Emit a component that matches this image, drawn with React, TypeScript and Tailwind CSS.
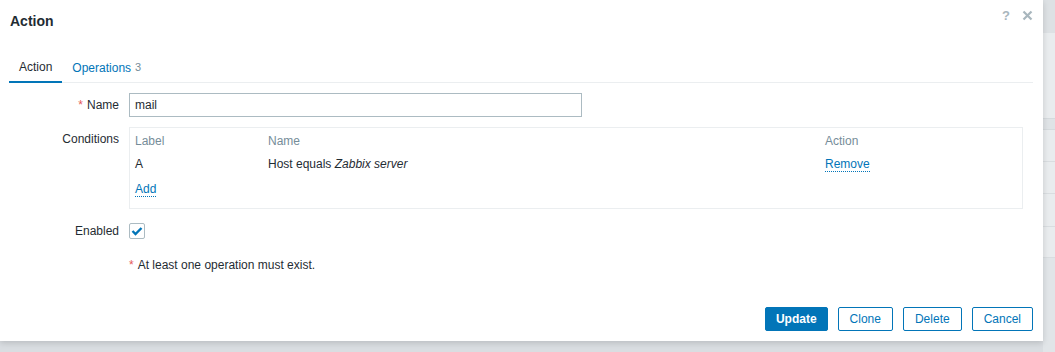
import React from "react";

const font = { fontFamily: '"Liberation Sans", Arial, sans-serif' };

function Link({ children }: { children: React.ReactNode }) {
  return (
    <span className="text-[#0275b8] border-b border-dotted border-[#0275b8] leading-[14px]">{children}</span>
  );
}

function Row({ label, required, children, className = "", labelClass = "" }: { label?: string; required?: boolean; children: React.ReactNode; className?: string; labelClass?: string }) {
  return (
    <div className={`flex ${className}`}>
      <div className={`w-[129px] shrink-0 pr-[10px] flex justify-end ${labelClass}`}>
        {label && (
          <span className="text-[#1f2c33]">
            {required && <span className="text-[#e45959] mr-[4px]">*</span>}
            {label}
          </span>
        )}
      </div>
      <div className="flex-1">{children}</div>
    </div>
  );
}

export default function App() {
  return (
    <div className="w-[1055px] h-[352px] overflow-hidden bg-[#d9dde1] flex text-[12px]" style={font}>
      <div className="w-[1043px] h-[341px] bg-white shrink-0 shadow-[0_2px_6px_rgba(0,0,0,0.15)] flex flex-col relative z-10">
        {/* header */}
        <div className="h-[41px] flex items-center justify-between pl-[10px] pr-[10px]">
          <span className="text-[14px] font-bold text-[#1f2c33] mt-[1px]">Action</span>
          <div className="flex items-center gap-[12px] self-start mt-[6px]">
            <span className="text-[#a8b6bd] font-bold text-[13px]">?</span>
            <svg width="11" height="11" viewBox="0 0 11 11">
              <path d="M1.5 1.5 L9.5 9.5 M9.5 1.5 L1.5 9.5" stroke="#a8b6bd" strokeWidth="2.2" />
            </svg>
          </div>
        </div>
        {/* tabs */}
        <div className="mt-[13px] mx-[9px] mr-[10px] border-b border-[#ebeef0] flex h-[29px]">
          <div className="px-[10px] flex items-center border-b-2 border-[#0275b8] text-[#1f2c33] -mb-[1px] pb-[1px]">Action</div>
          <div className="px-[10px] flex items-center text-[#0275b8] pb-[1px]">
            Operations<span className="text-[#768d99] ml-[4px] text-[11px]">3</span>
          </div>
        </div>
        {/* form */}
        <div className="flex flex-col mt-[10px]">
          <Row label="Name" required labelClass="items-center">
            <div className="w-[453px] h-[24px] border border-[#acbbc2] flex items-center px-[5px] text-[#1f2c33]">mail</div>
          </Row>
          <Row label="Conditions" className="mt-[10px]" labelClass="items-start pt-[3px]">
            <div className="w-[894px] h-[82px] border border-[#ebeef0] px-[5px] pt-[2px] flex flex-col">
              <div className="flex h-[22px] items-center text-[#768d99]">
                <div className="w-[133px]">Label</div>
                <div className="w-[557px]">Name</div>
                <div>Action</div>
              </div>
              <div className="flex h-[23px] items-center text-[#1f2c33]">
                <div className="w-[133px]">A</div>
                <div className="w-[557px]">Host equals <i>Zabbix server</i></div>
                <div><Link>Remove</Link></div>
              </div>
              <div className="flex h-[22px] items-center mt-[3px]">
                <Link>Add</Link>
              </div>
            </div>
          </Row>
          <div className="flex mt-[13px] items-center h-[18px]">
            <div className="w-[129px] shrink-0 pr-[10px] text-right text-[#1f2c33]">Enabled</div>
            <div className="w-[16px] h-[16px] border border-[#acbbc2] rounded-[2px] flex items-center justify-center">
              <svg width="12" height="10" viewBox="0 0 12 10">
                <path d="M1.5 5 L4.5 8 L10.5 2" stroke="#0275b8" strokeWidth="2.4" fill="none" />
              </svg>
            </div>
          </div>
          <div className="flex mt-[16px]">
            <div className="w-[129px] shrink-0" />
            <div className="text-[#1f2c33]"><span className="text-[#e45959] mr-[4px]">*</span>At least one operation must exist.</div>
          </div>
        </div>
        <div className="flex-1" />
        {/* footer */}
        <div className="flex justify-end gap-[10px] pr-[10px] pb-[10px]">
          <button className="h-[24px] px-[10px] bg-[#0275b8] text-white font-bold rounded-[2px] border border-[#0275b8]">Update</button>
          <button className="h-[24px] px-[11px] bg-white text-[#0275b8] rounded-[2px] border border-[#0275b8]">Clone</button>
          <button className="h-[24px] px-[11px] bg-white text-[#0275b8] rounded-[2px] border border-[#0275b8]">Delete</button>
          <button className="h-[24px] px-[11px] bg-white text-[#0275b8] rounded-[2px] border border-[#0275b8]">Cancel</button>
        </div>
      </div>
      {/* background page strip */}
      <div className="flex-1 flex flex-col bg-[#e9ecee]">
        <div className="h-[33px] bg-[#dde1e4]" />
        <div className="h-[85px]" />
        <div className="h-[12px] bg-[#dfe3e6] border-y border-[#d5dadd]" />
        <div className="h-[32px] border-b border-[#d9dde0]" />
        <div className="h-[32px] border-b border-[#d9dde0]" />
        <div className="h-[33px] border-b border-[#d9dde0]" />
        <div className="h-[31px] border-b border-[#d9dde0]" />
        <div className="flex-1 bg-[#e1e5e8]" />
      </div>
    </div>
  );
}
